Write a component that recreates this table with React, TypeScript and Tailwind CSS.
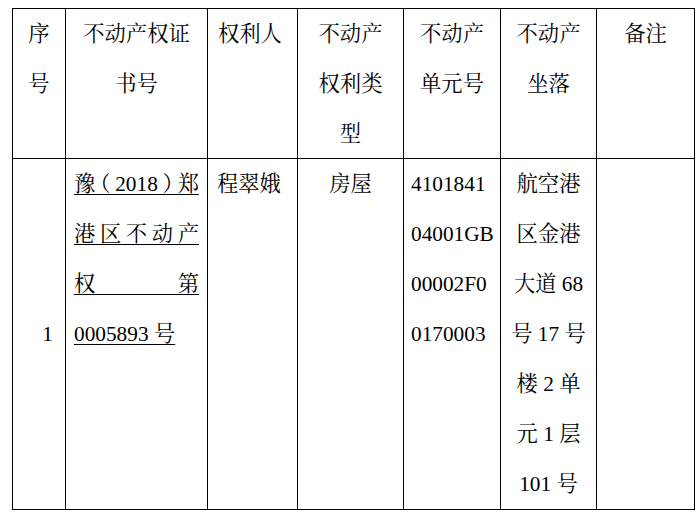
const FONT = '"Liberation Serif", "Noto Serif CJK SC", "Noto Sans CJK SC", serif';

const cell = 'border-r border-b border-black';
const ul = 'underline decoration-1 underline-offset-[3px] whitespace-nowrap';

function Lines({ items, className = '' }: { items: string[]; className?: string }) {
  return (
    <>
      {items.map((t, i) => (
        <div key={i} className={className}>
          {t}
        </div>
      ))}
    </>
  );
}

export default function App() {
  return (
    <div className="min-h-screen bg-white pt-[8px] pl-[12px]" style={{ fontFamily: FONT }}>
      <div className="grid w-[683px] grid-cols-[53px_142px_90px_106px_97px_96px_98px] grid-rows-[150px_351px] border-l border-t border-black text-[21.3px] leading-[50px] text-black">
        {/* 表头 */}
        <div className={`${cell} text-center`}>
          <Lines items={['序', '号']} />
        </div>
        <div className={`${cell} text-center`}>
          <Lines items={['不动产权证', '书号']} />
        </div>
        <div className={`${cell} pl-[10px]`}>权利人</div>
        <div className={`${cell} text-center`}>
          <Lines items={['不动产', '权利类', '型']} />
        </div>
        <div className={`${cell} text-center`}>
          <Lines items={['不动产', '单元号']} />
        </div>
        <div className={`${cell} text-center`}>
          <Lines items={['不动产', '坐落']} />
        </div>
        <div className={`${cell} text-center`}>备注</div>

        {/* 数据行 */}
        <div className={`${cell} flex items-center justify-end pr-[12px]`}>1</div>
        <div className={`${cell} px-[8px]`}>
          <div className={`${ul} text-justify [text-align-last:justify] [font-feature-settings:'halt']`}>
            豫（2018）郑
          </div>
          <div className={`${ul} text-justify [text-align-last:justify]`}>港区不动产</div>
          <div className={`${ul} text-justify [text-align-last:justify]`}>权第</div>
          <div>
            <span className={ul}>0005893 号</span>
          </div>
        </div>
        <div className={`${cell} pl-[9px]`}>程翠娥</div>
        <div className={`${cell} text-center`}>房屋</div>
        <div className={`${cell} pl-[7px]`}>
          <Lines items={['4101841', '04001GB', '00002F0', '0170003']} />
        </div>
        <div className={`${cell} text-center`}>
          <Lines items={['航空港', '区金港', '大道 68', '号 17 号', '楼 2 单', '元 1 层', '101 号']} />
        </div>
        <div className={cell} />
      </div>
    </div>
  );
}
